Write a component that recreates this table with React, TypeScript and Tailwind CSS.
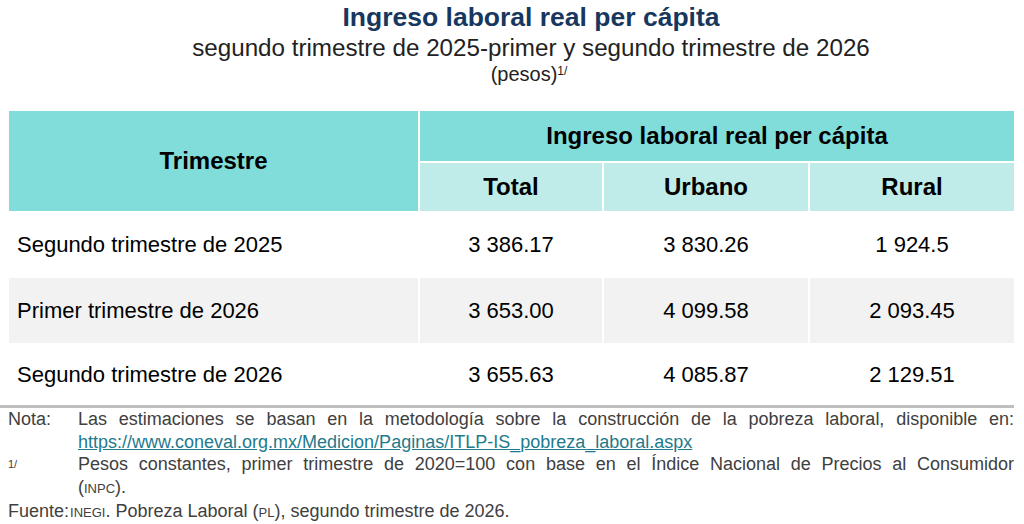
export default function App() {
  const rows = [
    { label: "Segundo trimestre de 2025", total: "3 386.17", urbano: "3 830.26", rural: "1 924.5", shaded: false },
    { label: "Primer trimestre de 2026", total: "3 653.00", urbano: "4 099.58", rural: "2 093.45", shaded: true },
    { label: "Segundo trimestre de 2026", total: "3 655.63", urbano: "4 085.87", rural: "2 129.51", shaded: false }
  ];

  return (
    <div className="h-[524px] w-[1024px] overflow-hidden bg-white font-['Liberation_Sans',Arial,sans-serif]">
      <div className="pl-[38px] text-center">
        <h1 className="text-[26.5px] font-bold leading-[34px] text-[#17375e]">Ingreso laboral real per cápita</h1>
        <p className="text-[24.2px] leading-[28px] text-[#222222]">
          segundo trimestre de 2025-primer y segundo trimestre de 2026
        </p>
        <p className="pr-[4px] text-[20px] leading-[24px] text-[#222222]">
          (pesos)<sup className="text-[12px]">1/</sup>
        </p>
      </div>

      <table className="ml-[9px] mt-[25px] w-[1005px] border-collapse text-[22px] text-black">
        <thead>
          <tr className="h-[51px]">
            <th rowSpan={2} className="w-[410px] border-r-2 border-white bg-[#80ddd9] text-[24px] font-bold">
              Trimestre
            </th>
            <th colSpan={3} className="border-b-2 border-white bg-[#80ddd9] text-[24px] font-bold">
              Ingreso laboral real per cápita
            </th>
          </tr>
          <tr className="h-[49px]">
            <th className="w-[184px] border-r-2 border-white bg-[#bfebe8] text-[24px] font-bold">Total</th>
            <th className="w-[206px] border-r-2 border-white bg-[#bfebe8] text-[24px] font-bold">Urbano</th>
            <th className="bg-[#bfebe8] text-[24px] font-bold">Rural</th>
          </tr>
        </thead>
        <tbody>
          {rows.map((row, i) => (
            <tr
              key={row.label}
              className={row.shaded ? "h-[65px] bg-[#f2f2f2]" : i === 0 ? "h-[67px] bg-white" : "h-[62px] bg-white"}
            >
              <td className="border-r-2 border-white pl-[8px]">{row.label}</td>
              <td className="border-r-2 border-white text-center">{row.total}</td>
              <td className="border-r-2 border-white text-center">{row.urbano}</td>
              <td className="text-center">{row.rural}</td>
            </tr>
          ))}
        </tbody>
      </table>

      <div className="mr-[10px] border-t-[3px] border-[#bfbfbf] pl-[8px] text-[18px] leading-[22.5px] text-[#404040]">
        <div className="flex">
          <span className="w-[70px] shrink-0">Nota:</span>
          <div className="min-w-0 flex-1">
            <p className="text-justify [text-align-last:justify]">
              Las estimaciones se basan en la metodología sobre la construcción de la pobreza laboral, disponible en:
            </p>
            <p>
              <a href="#" className="text-[#1f7a8c] underline">
                https://www.coneval.org.mx/Medicion/Paginas/ITLP-IS_pobreza_laboral.aspx
              </a>
            </p>
          </div>
        </div>
        <div className="flex">
          <span className="w-[70px] shrink-0 pt-[2px] text-[11px] leading-[18px]">1/</span>
          <div className="min-w-0 flex-1">
            <p className="text-justify [text-align-last:justify]">
              Pesos constantes, primer trimestre de 2020=100 con base en el Índice Nacional de Precios al Consumidor
            </p>
            <p>
              (<span className="text-[13px]">INPC</span>).
            </p>
          </div>
        </div>
        <p>
          Fuente:<span className="ml-[1px] text-[13px]">INEGI</span>. Pobreza Laboral (
          <span className="text-[13px]">PL</span>), segundo trimestre de 2026.
        </p>
      </div>
    </div>
  );
}
